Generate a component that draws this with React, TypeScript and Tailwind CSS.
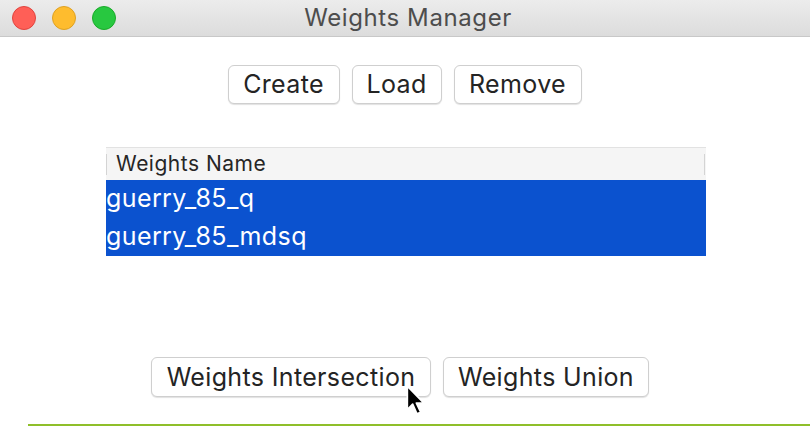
import React from "react";

const Btn = ({ label, className }: { label: string; className: string }) => (
  <div
    className={`flex items-center justify-center rounded-[6px] border border-[#cfcfcf] bg-white text-[25px] leading-none tracking-[0.35px] text-[#242424] shadow-[0_1px_1px_rgba(0,0,0,0.12)] ${className}`}
  >
    {label}
  </div>
);

export default function App() {
  return (
    <div
      className="relative h-[426px] w-[810px] overflow-hidden bg-white"
      style={{ fontFamily: "Inter, 'Noto Sans', sans-serif" }}
    >
      {/* title bar */}
      <div className="flex h-[37px] items-center border-b border-[#c8c8c8] bg-gradient-to-b from-[#ececec] to-[#dcdcdc]">
        <div className="flex gap-[16px] pl-[12px]">
          <div className="h-[24px] w-[24px] rounded-full border border-[#e0443e] bg-[#ff5f57]" />
          <div className="h-[24px] w-[24px] rounded-full border border-[#dea123] bg-[#febc2e]" />
          <div className="h-[24px] w-[24px] rounded-full border border-[#1aab29] bg-[#28c840]" />
        </div>
        <div className="flex-1 pr-[110px] text-center text-[24px] tracking-[0.6px] text-[#4d4d4d]">Weights Manager</div>
      </div>

      {/* top buttons */}
      <div className="mt-[28px] flex justify-center gap-[12px] pr-[1px]">
        <Btn label="Create" className="h-[39px] w-[112px]" />
        <Btn label="Load" className="h-[39px] w-[90px]" />
        <Btn label="Remove" className="h-[39px] w-[128px]" />
      </div>

      {/* list */}
      <div className="ml-[106px] mt-[43px] w-[600px]">
        <div className="flex h-[33px] items-center border-t border-[#e2e2e2] bg-[#f5f5f5]">
          <div className="h-[21px] w-[1px] bg-[#d4d4d4]" />
          <div className="flex-1 pl-[9px] text-[21px] tracking-[0.5px] text-[#262626]">Weights Name</div>
          <div className="mr-[1px] h-[21px] w-[1px] bg-[#d4d4d4]" />
        </div>
        <div className="bg-[#0b52cf] text-[25px] tracking-[0.4px] text-white">
          <div className="flex h-[38px] items-center">guerry_85_q</div>
          <div className="flex h-[38px] items-center">guerry_85_mdsq</div>
        </div>
      </div>

      {/* bottom buttons */}
      <div className="mt-[101px] flex justify-center gap-[12px] pr-[10px]">
        <Btn label="Weights Intersection" className="h-[40px] w-[280px]" />
        <Btn label="Weights Union" className="h-[40px] w-[206px]" />
      </div>

      {/* green line */}
      <div className="absolute bottom-0 left-[28px] right-0 h-[2px] bg-[#8fbf2a]" />

      {/* cursor */}
      <svg className="absolute left-[405px] top-[385px]" width="26" height="32" viewBox="0 0 24 30">
        <path d="M2 1 L2 23 L7 18 L11 27 L14.5 25.5 L10.5 17 L17.5 17 Z" fill="#000" stroke="#fff" strokeWidth="1.6" strokeLinejoin="round" />
      </svg>
    </div>
  );
}
